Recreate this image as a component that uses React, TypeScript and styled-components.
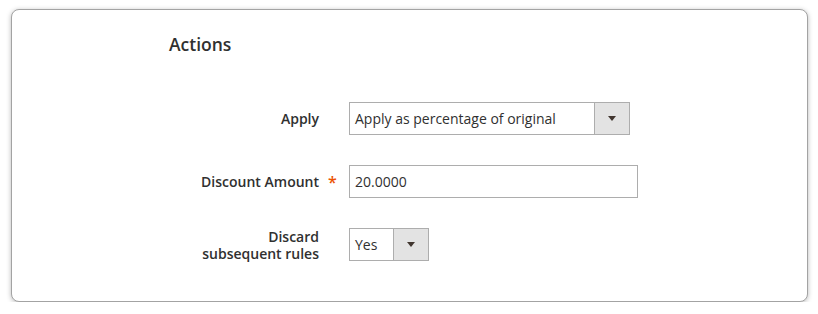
import React from 'react';
import styled, { createGlobalStyle } from 'styled-components';

const GlobalStyle = createGlobalStyle`
  html, body {
    margin: 0;
    padding: 0;
    background: #ffffff;
  }
  body {
    font-family: 'Open Sans', 'Noto Sans', sans-serif;
    color: #303030;
  }
`;

const App: React.FC = () => {
  return (
    <>
      <GlobalStyle />
      <Page>
        <Card>
          <Title>Actions</Title>
          <Form>
            <Label>Apply</Label>
            <Marker />
            <Select width={281}>
              <SelectText>Apply as percentage of original</SelectText>
              <ArrowBox>
                <Arrow />
              </ArrowBox>
            </Select>

            <Label>Discount Amount</Label>
            <Marker>*</Marker>
            <Input defaultValue="20.0000" />

            <Label>
              Discard
              <br />
              subsequent rules
            </Label>
            <Marker />
            <Select width={80}>
              <SelectText>Yes</SelectText>
              <ArrowBox>
                <Arrow />
              </ArrowBox>
            </Select>
          </Form>
        </Card>
      </Page>
    </>
  );
};

export default App;

const Page = styled.div`
  padding: 9px 11px 0 11px;
`;

const Card = styled.div`
  box-sizing: border-box;
  width: 797px;
  height: 293px;
  background: #ffffff;
  border: 1px solid #a3a3a3;
  border-radius: 8px;
  box-shadow: 0 1px 5px rgba(0, 0, 0, 0.28);
  padding: 22px 0 0 0;
`;

const Title = styled.h2`
  margin: 0 0 0 157px;
  font-size: 17.5px;
  font-weight: 600;
  line-height: 24px;
  color: #303030;
`;

const Form = styled.div`
  display: grid;
  grid-template-columns: 307px 30px auto;
  grid-auto-rows: 33px;
  row-gap: 30px;
  align-items: center;
  justify-items: start;
  margin-top: 46px;
`;

const Label = styled.div`
  justify-self: end;
  text-align: right;
  font-size: 14px;
  font-weight: 600;
  line-height: 17px;
  color: #303030;
`;

const Marker = styled.span`
  justify-self: stretch;
  padding-left: 9px;
  font-size: 16px;
  font-weight: 600;
  color: #eb5202;
  line-height: 16px;
`;

const Select = styled.div<{ width: number }>`
  box-sizing: border-box;
  display: flex;
  width: ${(p) => p.width}px;
  height: 33px;
  border: 1px solid #adadad;
  background: #ffffff;
`;

const SelectText = styled.span`
  flex: 1;
  display: flex;
  align-items: center;
  padding-left: 5px;
  font-size: 14px;
  color: #303030;
  white-space: nowrap;
`;

const ArrowBox = styled.span`
  width: 34px;
  display: flex;
  align-items: center;
  justify-content: center;
  background: #e3e3e3;
  border-left: 1px solid #adadad;
`;

const Arrow = styled.span`
  width: 0;
  height: 0;
  border-left: 4px solid transparent;
  border-right: 4px solid transparent;
  border-top: 5px solid #41362f;
`;

const Input = styled.input`
  box-sizing: border-box;
  width: 289px;
  height: 33px;
  border: 1px solid #adadad;
  padding: 0 5px;
  font-family: 'Open Sans', 'Noto Sans', sans-serif;
  font-size: 14px;
  color: #303030;
  outline: none;
  border-radius: 0;
`;
